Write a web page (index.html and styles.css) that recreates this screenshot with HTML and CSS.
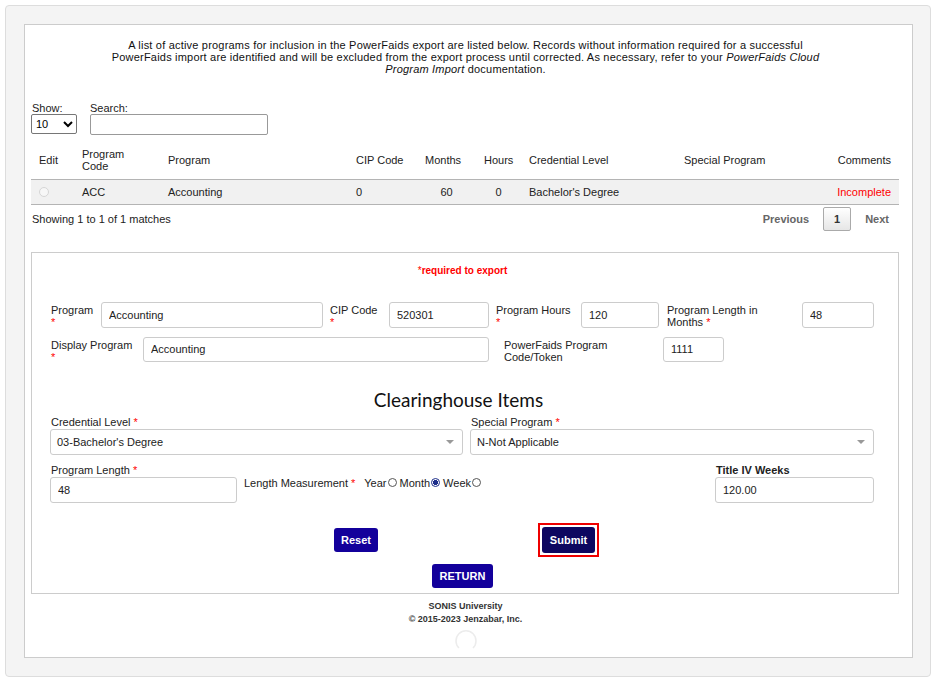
FILE: index.html
```html
<!DOCTYPE html>
<html>
<head>
<meta charset="utf-8">
<link rel="stylesheet" href="styles.css">
</head>
<body>
<div class="outer">
  <div class="inner">
    <p class="intro">A list of active programs for inclusion in the PowerFaids export are listed below. Records without information required for a successful PowerFaids import are identified and will be excluded from the export process until corrected. As necessary, refer to your <i>PowerFaids Cloud Program Import</i> documentation.</p>

    <div class="controls">
      <div class="ctrl">
        <label class="ctrl-label">Show:</label>
        <select class="show-select"><option>10</option></select>
      </div>
      <div class="ctrl">
        <label class="ctrl-label">Search:</label>
        <input class="search-input" type="text">
      </div>
    </div>

    <table class="grid">
      <colgroup>
        <col class="c-edit"><col class="c-code"><col class="c-prog"><col class="c-cip"><col class="c-months"><col class="c-hours"><col class="c-cred"><col class="c-spec"><col class="c-comm">
      </colgroup>
      <thead>
        <tr>
          <th>Edit</th><th>Program<br>Code</th><th>Program</th><th>CIP Code</th><th>Months</th><th>Hours</th><th>Credential Level</th><th>Special Program</th><th class="right">Comments</th>
        </tr>
      </thead>
      <tbody>
        <tr>
          <td><span class="radio-dis"></span></td><td>ACC</td><td>Accounting</td><td>0</td><td class="center">60</td><td class="center">0</td><td>Bachelor's Degree</td><td></td><td class="right red">Incomplete</td>
        </tr>
      </tbody>
    </table>

    <div class="info">
      <span>Showing 1 to 1 of 1 matches</span>
      <div class="pager">
        <span class="pg-link">Previous</span>
        <span class="pg-num">1</span>
        <span class="pg-link">Next</span>
      </div>
    </div>

    <div class="formbox">
      <div class="req"><span class="star">*</span><b>required to export</b></div>

      <div class="frow row1">
        <label class="lbl w-prog">Program<br><span class="star">*</span></label>
        <input class="fi w-i-prog" type="text" value="Accounting">
        <label class="lbl w-cip">CIP Code<br><span class="star">*</span></label>
        <input class="fi w-i-cip" type="text" value="520301">
        <label class="lbl w-hours">Program Hours<br><span class="star">*</span></label>
        <input class="fi w-i-hours" type="text" value="120">
        <label class="lbl w-months">Program Length in Months <span class="star">*</span></label>
        <input class="fi w-i-months" type="text" value="48">
      </div>

      <div class="frow row2">
        <label class="lbl w-disp">Display Program<br><span class="star">*</span></label>
        <input class="fi w-i-disp" type="text" value="Accounting">
        <label class="lbl w-pf">PowerFaids Program Code/Token</label>
        <input class="fi w-i-pf" type="text" value="1111">
      </div>

      <h2 class="ch-title">Clearinghouse Items</h2>

      <div class="selrow">
        <div class="selcol c1">
          <div class="slbl">Credential Level <span class="star">*</span></div>
          <div class="sel"><span>03-Bachelor's Degree</span><span class="caret"></span></div>
        </div>
        <div class="selcol c2">
          <div class="slbl">Special Program <span class="star">*</span></div>
          <div class="sel"><span>N-Not Applicable</span><span class="caret"></span></div>
        </div>
      </div>

      <div class="lenrow">
        <div class="lencol">
          <div class="slbl">Program Length <span class="star">*</span></div>
          <input class="fi w-i-len" type="text" value="48">
        </div>
        <div class="measure">
          <span class="m-lbl">Length Measurement <span class="star">*</span></span>
          <span class="opt">Year<span class="rad"></span></span>
          <span class="opt">Month<span class="rad on"></span></span>
          <span class="opt">Week<span class="rad"></span></span>
        </div>
        <div class="t4col">
          <div class="slbl bold">Title IV Weeks</div>
          <input class="fi w-i-t4" type="text" value="120.00">
        </div>
      </div>

      <div class="btnrow">
        <button class="btn reset">Reset</button>
        <span class="focus-ring"><button class="btn submit">Submit</button></span>
      </div>
      <div class="btnrow2">
        <button class="btn ret">RETURN</button>
      </div>
    </div>

    <div class="footer">
      <div>SONIS University</div>
      <div>© 2015-2023 Jenzabar, Inc.</div>
    </div>
    <div class="spinner">
      <svg width="24" height="24" viewBox="0 0 24 24"><path d="M5 19 A10 10 0 1 1 19 19" fill="none" stroke="#ececec" stroke-width="1.5"/></svg>
    </div>
  </div>
</div>
</body>
</html>
```
FILE: styles.css
```css
* { box-sizing: border-box; }
body {
  margin: 0;
  font-family: "Liberation Sans", Arial, sans-serif;
  font-size: 11px;
  color: #333;
  background: #fff;
}
.outer {
  margin: 5px 0 0 5px;
  width: 926px;
  height: 672px;
  background: #f4f4f4;
  border: 1px solid #ddd;
  border-radius: 4px;
  padding: 18px 0 0 18px;
}
.inner {
  width: 889px;
  height: 634px;
  background: #fff;
  border: 1px solid #ccc;
  padding: 14px 12px 0 6px;
}
.intro {
  margin: 0 auto;
  width: 722px;
  text-align: center;
  font-size: 11px;
  letter-spacing: 0.2px;
  line-height: 12px;
  color: #111;
}
.controls {
  display: flex;
  gap: 12px;
  margin-top: 27px;
}
.ctrl { display: flex; flex-direction: column; }
.ctrl-label {
  display: block;
  line-height: 12px;
  padding-left: 1px;
  color: #222;
}
.show-select {
  width: 46px;
  height: 20px;
  margin: 0;
  font-family: "Liberation Sans", Arial, sans-serif;
  font-size: 11px;
  border: 1px solid #767676;
  border-radius: 2px;
  background: #fff;
  color: #000;
}
.search-input {
  width: 178px;
  height: 21px;
  margin: 0 0 0 1px;
  border: 1px solid #999;
  border-radius: 2px;
}
.grid {
  margin-top: 7px;
  width: 868px;
  border-collapse: collapse;
  table-layout: fixed;
}
.c-edit { width: 43px; }
.c-code { width: 86px; }
.c-prog { width: 188px; }
.c-cip { width: 69px; }
.c-months { width: 59px; }
.c-hours { width: 45px; }
.c-cred { width: 155px; }
.c-spec { width: 153px; }
.c-comm { width: 70px; }
.grid th {
  font-weight: normal;
  text-align: left;
  height: 37px;
  padding: 0 8px;
  line-height: 12px;
  border-bottom: 1px solid #b4b4b4;
  color: #222;
  vertical-align: middle;
  white-space: nowrap;
}
.grid td {
  height: 25px;
  padding: 0 8px;
  background: #f1f1f1;
  border-bottom: 1px solid #b4b4b4;
  color: #222;
  white-space: nowrap;
}
.grid .right { text-align: right; padding-right: 8px; }
.grid .center { text-align: center; }
.grid .red, .red { color: #f00; }
.radio-dis {
  display: inline-block;
  width: 10px;
  height: 10px;
  border: 1px solid #d6d6d6;
  border-radius: 50%;
  background: #f7f7f7;
  vertical-align: -1px;
}
.info {
  display: flex;
  justify-content: space-between;
  align-items: center;
  height: 29px;
  padding-left: 1px;
  color: #222;
}
.pager { display: flex; align-items: center; padding-right: 11px; }
.pg-link { color: #666; font-weight: bold; padding: 0 14px; }
.pg-link:last-child { padding-right: 0; }
.pg-num {
  display: inline-block;
  width: 28px;
  height: 24px;
  line-height: 22px;
  text-align: center;
  border: 1px solid #aaa;
  border-radius: 2px;
  background: linear-gradient(#fff, #e6e6e6);
  font-weight: bold;
  color: #333;
}
.formbox {
  margin-top: 18px;
  width: 868px;
  height: 342px;
  border: 1px solid #ccc;
  padding: 12px 24px 0 19px;
}
.req {
  text-align: center;
  font-size: 10px;
  line-height: 12px;
  color: #f00;
}
.star { color: #f00; }
.frow { display: flex; align-items: flex-start; }
.row1 { margin-top: 25px; }
.row2 { margin-top: 9px; }
.lbl {
  line-height: 12px;
  padding-top: 2px;
  color: #222;
}
.fi {
  height: 26px;
  margin: 0;
  border: 1px solid #ccc;
  border-radius: 3px;
  padding: 0 7px;
  font-family: "Liberation Sans", Arial, sans-serif;
  font-size: 11px;
  color: #222;
  background: #fff;
}
.w-prog { width: 50px; }
.w-i-prog { width: 222px; }
.w-cip { width: 59px; margin-left: 7px; }
.w-i-cip { width: 100px; }
.w-hours { width: 85px; margin-left: 7px; }
.w-i-hours { width: 78px; }
.w-months { width: 128px; margin-left: 8px; margin-right: 7px; }
.w-i-months { width: 72px; }
.w-disp { width: 92px; }
.w-i-disp { width: 346px; height: 25px; }
.w-pf { width: 159px; margin-left: 15px; padding-right: 40px; }
.w-i-pf { width: 61px; height: 25px; }
.ch-title {
  margin: 26px 0 0 0;
  text-align: center;
  font-family: Lato, "Liberation Sans", sans-serif;
  font-weight: normal;
  font-size: 19px;
  line-height: 22px;
  color: #111;
  padding-right: 8px;
}
.selrow {
  display: flex;
  gap: 7px;
  margin-top: 5px;
  margin-left: -1px;
}
.selcol.c1 { width: 413px; }
.selcol.c2 { width: 404px; }
.slbl {
  line-height: 12px;
  padding-left: 1px;
  color: #222;
}
.slbl.bold { font-weight: bold; }
.sel {
  margin-top: 1px;
  height: 26px;
  border: 1px solid #ccc;
  border-radius: 3px;
  display: flex;
  align-items: center;
  justify-content: space-between;
  padding: 0 8px 0 6px;
  color: #222;
}
.caret {
  width: 0;
  height: 0;
  border-left: 4px solid transparent;
  border-right: 4px solid transparent;
  border-top: 4px solid #999;
}
.lenrow {
  display: flex;
  align-items: flex-start;
  margin-top: 9px;
  margin-left: -1px;
}
.lencol { width: 187px; }
.w-i-len { width: 187px; height: 26px; margin-top: 1px; }
.measure {
  margin-left: 7px;
  padding-top: 13px;
  display: flex;
  align-items: center;
  color: #222;
  line-height: 12px;
}
.m-lbl { margin-right: 9px; }
.opt { display: inline-flex; align-items: center; margin-right: 3px; }
.rad {
  display: inline-block;
  width: 9px;
  height: 9px;
  border: 1px solid #555;
  border-radius: 50%;
  margin-left: 1px;
  background: #fff;
}
.rad.on {
  background: radial-gradient(circle, #1d2e8a 0 2.3px, #fff 2.8px);
  border-color: #1d2e8a;
}
.t4col { margin-left: auto; width: 159px; }
.w-i-t4 { width: 159px; height: 26px; margin-top: 1px; }
.btnrow {
  display: flex;
  align-items: center;
  margin-top: 20px;
  height: 34px;
  padding-left: 283px;
}
.btn {
  height: 24px;
  border: none;
  border-radius: 3px;
  background: #13009b;
  color: #fff;
  font-family: "Liberation Sans", Arial, sans-serif;
  font-weight: bold;
  font-size: 11px;
  padding: 0 9px;
}
.reset { width: 44px; padding: 0; }
.focus-ring {
  margin-left: 160px;
  border: 2px solid #e00;
  padding: 2px;
  display: inline-flex;
}
.submit { background: #0d0760; width: 53px; padding: 0; height: 26px; }
.btnrow2 {
  display: flex;
  justify-content: center;
  margin-top: 7px;
}
.ret { width: 61px; padding: 0; }
.footer {
  margin-top: 6px;
  text-align: center;
  font-weight: bold;
  font-size: 9px;
  line-height: 13px;
  color: #333;
}
.spinner {
  display: flex;
  justify-content: center;
  margin-top: 3px;
}
```
